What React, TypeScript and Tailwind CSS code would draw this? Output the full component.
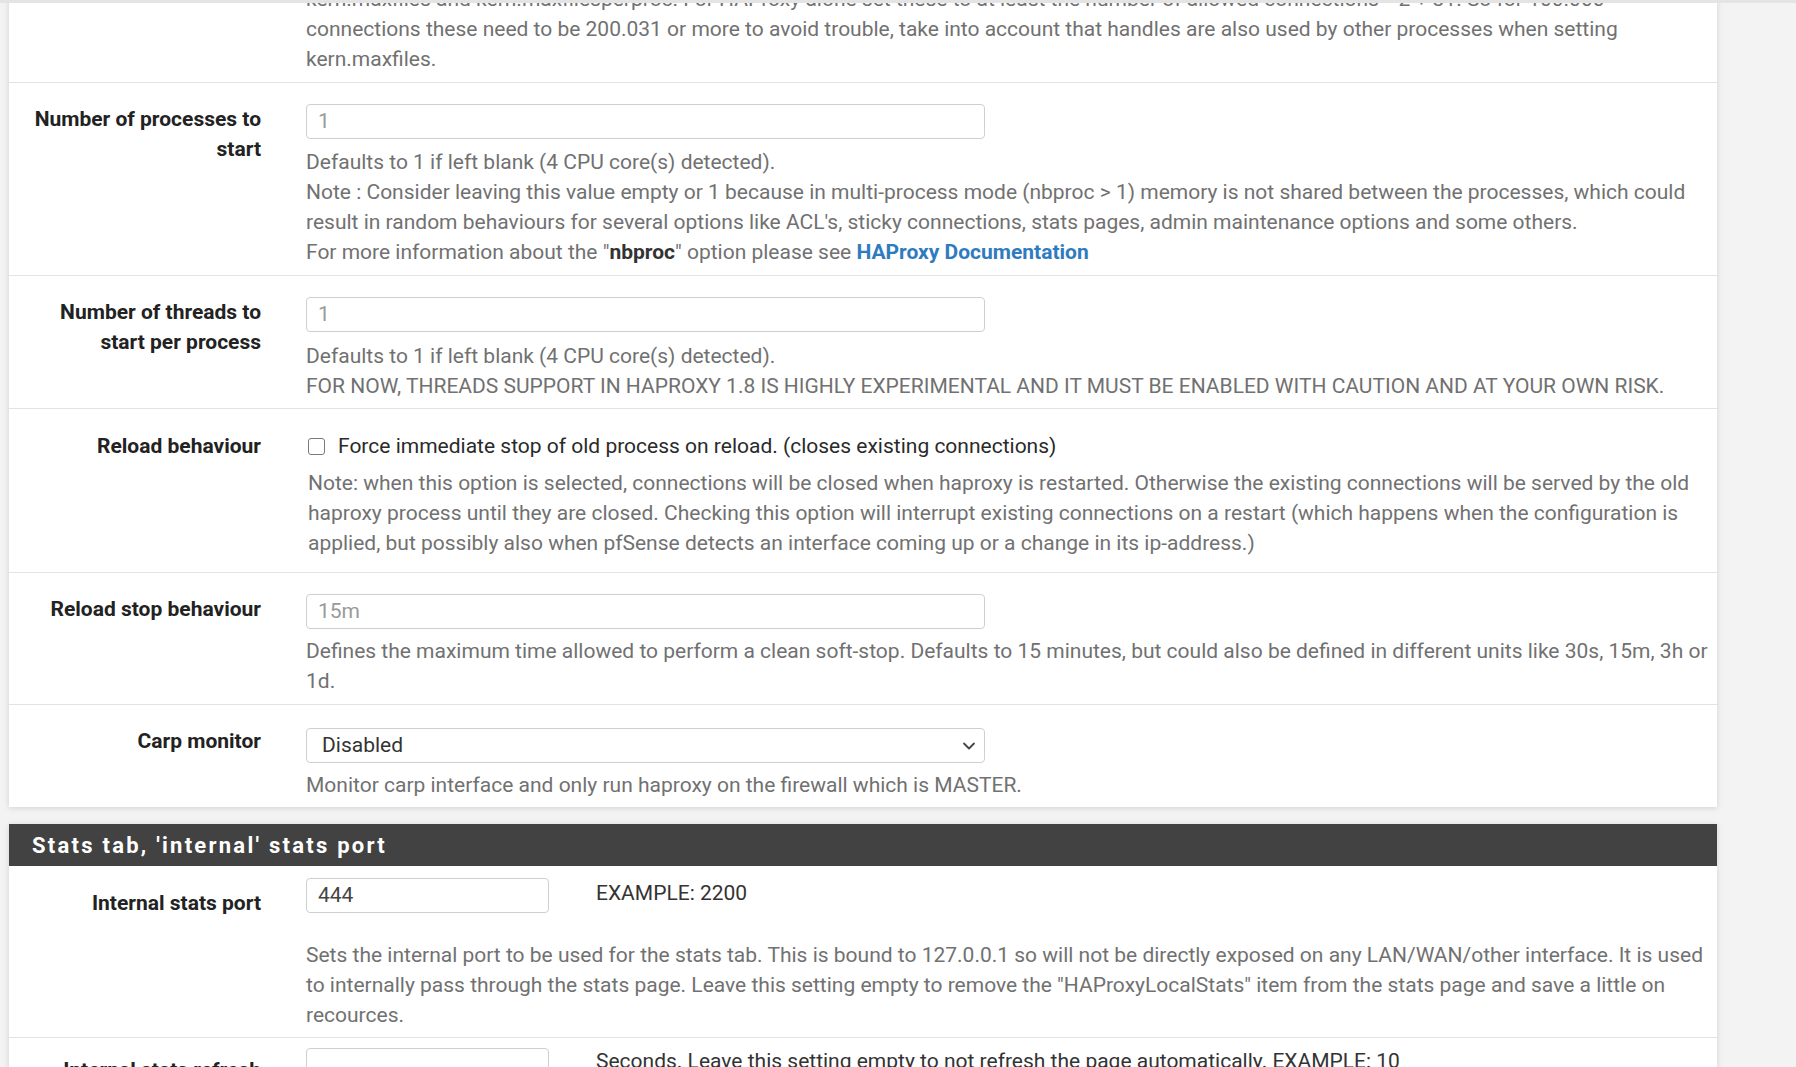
import React from "react";

function Row({
  label,
  children,
  labelPad = "pt-[21px]",
  last = false,
}: {
  label?: React.ReactNode;
  children: React.ReactNode;
  labelPad?: string;
  last?: boolean;
}) {
  return (
    <div className={`flex ${last ? "" : "border-b border-[#e3e3e3]"}`}>
      <div
        className={`w-[284px] shrink-0 pl-[15px] pr-[32px] text-right font-bold leading-[30px] text-[#222] ${labelPad}`}
      >
        {label}
      </div>
      <div className="min-w-0 flex-1 pl-[13px] pr-[3px]">{children}</div>
    </div>
  );
}

function TextInput({ value, muted = true, small = false }: { value: string; muted?: boolean; small?: boolean }) {
  return (
    <div
      className={`flex h-[35px] items-center rounded-[4px] border border-[#cfcfcf] bg-white pl-[11px] leading-none ${
        small ? "w-[243px]" : "w-[679px]"
      } ${muted ? "text-[#9a9a9a]" : "text-[#444]"}`}
    >
      {value}
    </div>
  );
}

function Help({ children, className = "" }: { children: React.ReactNode; className?: string }) {
  return <div className={`leading-[30px] text-[#717171] ${className}`}>{children}</div>;
}

export default function App() {
  return (
    <div className="relative h-[1067px] overflow-hidden bg-[#f3f3f3] font-['Roboto',sans-serif] text-[21px]">
      <div className="absolute inset-x-0 top-0 z-10 h-[3px] bg-[#e4e4e4]" />

      <div className="ml-[9px] mt-[-16px] w-[1708px] bg-white shadow-[0_1px_6px_rgba(0,0,0,0.14)]">
        <div className="flex border-b border-[#e3e3e3]">
          <div className="w-[284px] shrink-0" />
          <div className="min-w-0 flex-1 pb-[8px] pl-[13px] pr-[3px]">
            <Help>
              kern.maxfiles and kern.maxfilesperproc. For HAProxy alone set these to at least the number of allowed
              connections * 2 + 31. So for 100.000 connections these need to be 200.031 or more to avoid trouble, take
              into account that handles are also used by other processes when setting kern.maxfiles.
            </Help>
          </div>
        </div>

        <Row label="Number of processes to start">
          <div className="pb-[8px] pt-[21px]">
            <TextInput value="1" />
            <Help className="mt-[8px]">
              <div>Defaults to 1 if left blank (4 CPU core(s) detected).</div>
              <div>
                Note : Consider leaving this value empty or 1 because in multi-process mode (nbproc &gt; 1) memory is not
                shared between the processes, which could result in random behaviours for several options like ACL's,
                sticky connections, stats pages, admin maintenance options and some others.
              </div>
              <div>
                For more information about the "<b className="text-[#333]">nbproc</b>" option please see{" "}
                <a className="font-bold text-[#2f7bbf]">HAProxy Documentation</a>
              </div>
            </Help>
          </div>
        </Row>

        <Row label="Number of threads to start per process">
          <div className="pb-[7px] pt-[21px]">
            <TextInput value="1" />
            <Help className="mt-[9px]">
              <div>Defaults to 1 if left blank (4 CPU core(s) detected).</div>
              <div>
                FOR NOW, THREADS SUPPORT IN HAPROXY 1.8 IS HIGHLY EXPERIMENTAL AND IT MUST BE ENABLED WITH CAUTION AND AT
                YOUR OWN RISK.
              </div>
            </Help>
          </div>
        </Row>

        <Row label="Reload behaviour" labelPad="pt-[22px]">
          <div className="pb-[14px] pt-[22px]">
            <div className="flex h-[30px] items-center pl-[2px] text-[#2a2a2a]">
              <span className="h-[17px] w-[17px] shrink-0 rounded-[3px] border-[1.5px] border-[#7a7a7a] bg-white" />
              <span className="ml-[13px] leading-[30px]">
                Force immediate stop of old process on reload. (closes existing connections)
              </span>
            </div>
            <Help className="mt-[7px] pl-[2px]">
              Note: when this option is selected, connections will be closed when haproxy is restarted. Otherwise the
              existing connections will be served by the old haproxy process until they are closed. Checking this option
              will interrupt existing connections on a restart (which happens when the configuration is applied, but
              possibly also when pfSense detects an interface coming up or a change in its ip-address.)
            </Help>
          </div>
        </Row>

        <Row label="Reload stop behaviour">
          <div className="pb-[8px] pt-[21px]">
            <TextInput value="15m" />
            <Help className="mt-[7px]">
              Defines the maximum time allowed to perform a clean soft-stop. Defaults to 15 minutes, but could also be
              defined in different units like 30s, 15m, 3h or 1d.
            </Help>
          </div>
        </Row>

        <Row label="Carp monitor" labelPad="pt-[21px]" last>
          <div className="pb-[7px] pt-[23px]">
            <div className="flex h-[35px] w-[679px] items-center justify-between rounded-[4px] border border-[#cfcfcf] bg-white pl-[15px] pr-[7px] text-[#333]">
              <span>Disabled</span>
              <svg width="16" height="16" viewBox="0 0 16 16" fill="none">
                <path d="M3 5.5l5 5 5-5" stroke="#444" strokeWidth="1.8" strokeLinecap="round" strokeLinejoin="round" />
              </svg>
            </div>
            <Help className="mt-[7px]">Monitor carp interface and only run haproxy on the firewall which is MASTER.</Help>
          </div>
        </Row>
      </div>

      <div className="ml-[9px] mt-[17px] w-[1708px] bg-white shadow-[0_1px_6px_rgba(0,0,0,0.14)]">
        <div className="flex h-[42px] items-center bg-[#424242] pl-[23px] text-[22px] font-bold tracking-[2.25px] text-white">
          Stats tab, 'internal' stats port
        </div>

        <Row label="Internal stats port" labelPad="pt-[22px]">
          <div className="pb-[7px] pt-[12px]">
            <div className="flex items-start">
              <TextInput value="444" muted={false} small />
              <span className="ml-[47px] mt-[0px] leading-[30px] text-[#333]">EXAMPLE: 2200</span>
            </div>
            <Help className="mt-[27px]">
              Sets the internal port to be used for the stats tab. This is bound to 127.0.0.1 so will not be directly
              exposed on any LAN/WAN/other interface. It is used to internally pass through the stats page. Leave this
              setting empty to remove the "HAProxyLocalStats" item from the stats page and save a little on recources.
            </Help>
          </div>
        </Row>

        <Row label="Internal stats refresh rate" labelPad="pt-[17px]" last>
          <div className="pb-[7px] pt-[10px]">
            <div className="flex items-start">
              <TextInput value="" small />
              <span className="ml-[47px] mt-[-2px] leading-[30px] text-[#333]">
                Seconds. Leave this setting empty to not refresh the page automatically. EXAMPLE: 10
              </span>
            </div>
          </div>
        </Row>
      </div>
    </div>
  );
}
